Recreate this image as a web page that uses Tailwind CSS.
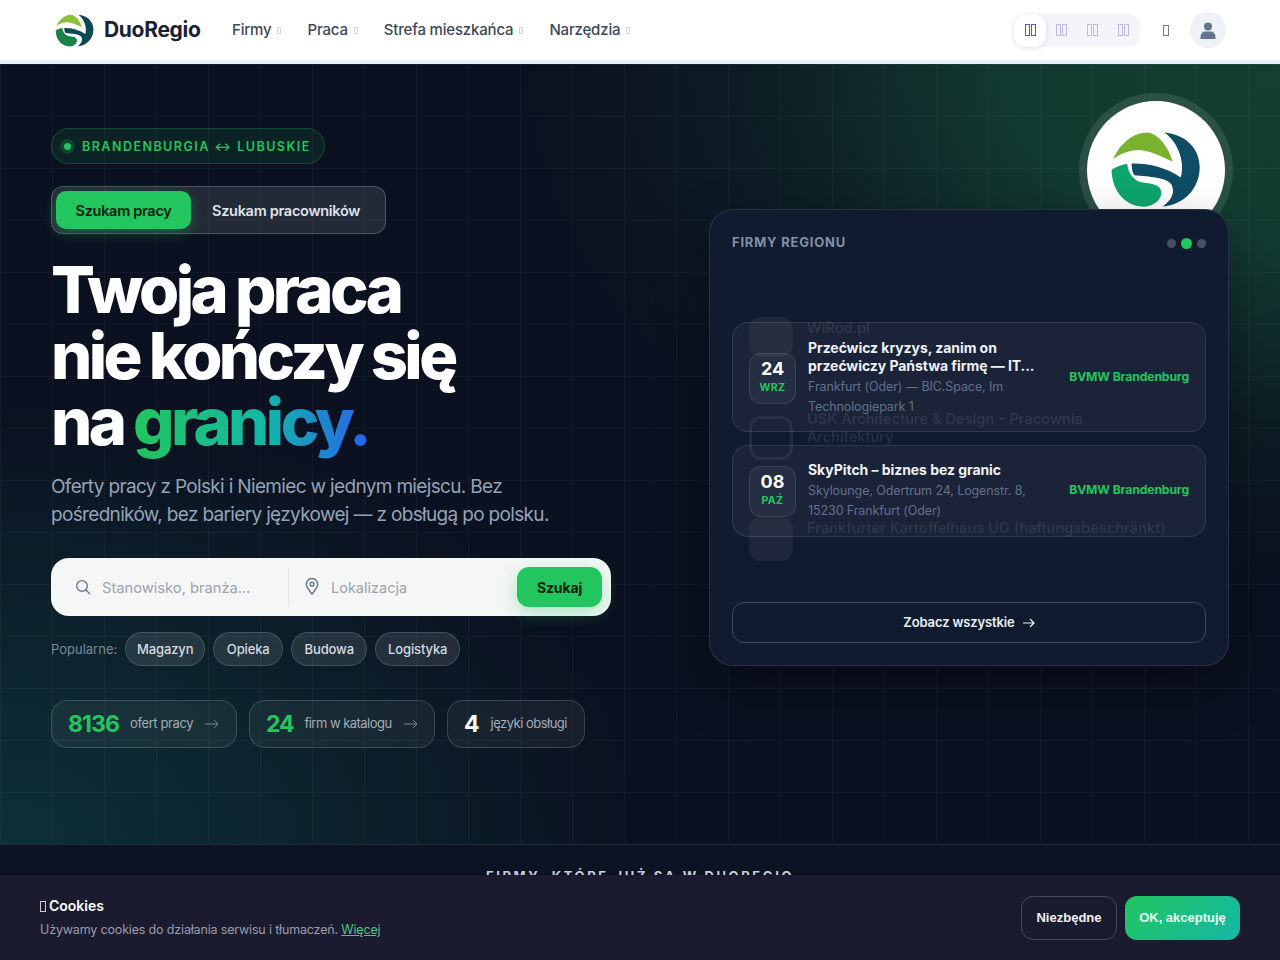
<!DOCTYPE html>
<html lang="pl">
<head>
  <meta charset="UTF-8">
  <meta name="viewport" content="width=device-width, initial-scale=1.0">
  <title>DuoRegio</title>
  <script src="https://cdn.jsdelivr.net/npm/@tailwindcss/browser@4"></script>
</head>

<body class="h-screen overflow-hidden bg-[#0c1424] font-[Inter,sans-serif]">

  <!-- nav -->
  <header class="h-[64px] bg-white border-b-[4px] border-[#eaf0f3] flex items-center pl-[55px] pr-[54px]">
    <a class="flex items-center gap-[10px] w-[177px]">
      <svg class="w-[39px] h-[35px]" viewBox="450 390 280 235">
        <path fill="#8cc23a" d="M460 475C480 430 520 395 562 394C600 396 630 440 643 484C600 462 560 445 530 448C505 450 480 460 460 475Z"/>
        <path fill="#0c4a52" d="M618 394C680 400 725 440 726 500C726 565 680 615 612 622C640 600 650 580 640 555C625 530 570 530 525 525C515 510 518 495 516 489C570 488 620 500 668 532C680 490 665 430 618 394Z"/>
        <path fill="#1b8049" d="M455 508C470 498 490 492 503 490C505 515 520 540 545 547C575 550 605 555 608 575C610 600 585 620 555 622C500 622 455 575 455 508Z"/>
      </svg>
      <span class="text-[21px] font-bold text-[#1a2035] tracking-[-0.015em]">DuoRegio</span>
    </a>
    <nav class="flex items-center gap-[26px] text-[15px] font-medium text-[#3d4659] tracking-[-0.012em]">
      <a class="flex items-center gap-[6px]">Firmy <span class="w-[4px] h-[7px] border border-[#d3d7de]"></span></a>
      <a class="flex items-center gap-[6px]">Praca <span class="w-[4px] h-[7px] border border-[#d3d7de]"></span></a>
      <a class="flex items-center gap-[6px]">Strefa mieszkańca <span class="w-[4px] h-[7px] border border-[#d3d7de]"></span></a>
      <a class="flex items-center gap-[6px]">Narzędzia <span class="w-[4px] h-[7px] border border-[#d3d7de]"></span></a>
    </nav>
    <div class="ml-auto flex items-center">
      <div class="flex items-center w-[126px] h-[33px] rounded-xl bg-[#f4f5fb]">
        <span class="w-[32px] h-[33px] rounded-xl bg-white shadow-[0_1px_5px_rgba(0,0,0,0.12)] flex items-center justify-center gap-[1px]"><i class="w-[5px] h-[12px] border border-[#5b52d6]"></i><i class="w-[5px] h-[12px] border border-[#5b52d6]"></i></span>
        <span class="w-[31px] flex justify-center gap-[1px]"><i class="w-[5px] h-[12px] border border-[#bcb9ee]"></i><i class="w-[5px] h-[12px] border border-[#bcb9ee]"></i></span>
        <span class="w-[31px] flex justify-center gap-[1px]"><i class="w-[5px] h-[12px] border border-[#bcb9ee]"></i><i class="w-[5px] h-[12px] border border-[#bcb9ee]"></i></span>
        <span class="w-[31px] flex justify-center gap-[1px]"><i class="w-[5px] h-[12px] border border-[#bcb9ee]"></i><i class="w-[5px] h-[12px] border border-[#bcb9ee]"></i></span>
      </div>
      <span class="ml-[23px] w-[6px] h-[11px] border border-[#777]"></span>
      <div class="ml-[21px] w-[36px] h-[36px] rounded-full bg-[#eef1f5] flex items-center justify-center">
        <svg class="w-[16px] h-[17px]" viewBox="0 0 16 17" fill="#64748b"><circle cx="8" cy="4.4" r="4"/><path d="M0.5 17v-2.2C0.5 11.6 3 9.6 5.5 9.6h5c2.500 0 5 2 5 5.200V17z"/></svg>
      </div>
    </div>
  </header>

  <!-- hero -->
  <section class="relative h-[780px] overflow-hidden bg-[#0b1120]">
    <div class="absolute inset-0 bg-[radial-gradient(ellipse_760px_520px_at_100%_0%,#14402f_0%,#123a30_35%,rgba(15,40,40,0.5)_70%,transparent_100%)]"></div>
    <div class="absolute inset-0 bg-[radial-gradient(ellipse_640px_440px_at_0%_100%,#0c3038_0%,rgba(13,46,52,0.6)_50%,transparent_100%)]"></div>
    <div class="absolute inset-0 bg-[linear-gradient(rgba(255,255,255,0.035)_1px,transparent_1px),linear-gradient(90deg,rgba(255,255,255,0.035)_1px,transparent_1px)] bg-[size:52px_52px]"></div>

    <div class="relative flex justify-between pl-[51px] pr-[51px] pt-[64px]">
      <!-- left column -->
      <div class="w-[560px]">
        <div class="inline-flex items-center h-[36px] pl-[12px] pr-[13px] rounded-full border border-[#22c55e]/25 bg-[#22c55e]/10 text-[12.500px] font-semibold tracking-[0.118em] text-[#22c55e]">
          <span class="w-[7px] h-[7px] rounded-full bg-[#22c55e] shadow-[0_0_0_4px_rgba(34,197,94,0.2)] mr-[11px]"></span>
          <span class="pt-[2px]">BRANDENBURGIA ↔ LUBUSKIE</span>
        </div>

        <div class="mt-[22px] flex items-center w-[335px] h-[48px] px-[4px] rounded-xl border border-white/20 bg-white/10 text-[14.500px] font-semibold tracking-[-0.02em]">
          <span class="w-[135px] h-[38px] pt-[1px] rounded-[10px] bg-[#22c55e] text-[#06200f] flex items-center justify-center shadow-[0_4px_14px_rgba(34,197,94,0.35)]">Szukam pracy</span>
          <span class="ml-[21px] pt-[1px] text-[#dfe3ea]">Szukam pracowników</span>
        </div>

        <h1 class="mt-[23px] text-[65px] leading-[66px] font-extrabold tracking-[-0.055em] [word-spacing:-1px] text-white">
          Twoja praca<br>nie kończy się<br>na <span class="bg-[linear-gradient(90deg,#22c55e,#14b8a6_55%,#2563eb)] bg-clip-text text-transparent">granicy.</span>
        </h1>

        <p class="mt-[18px] w-[520px] text-[19px] leading-[28px] text-[#94a3b8] tracking-[-0.035em]">Oferty pracy z Polski i Niemiec w jednym miejscu. Bez pośredników, bez bariery językowej — z obsługą po polsku.</p>

        <form class="mt-[29px] flex items-center h-[58px] rounded-[18px] bg-[#f5f6f6] pl-[24px] pr-[9px]">
          <svg class="w-[16px] h-[16px] shrink-0" viewBox="0 0 24 24" fill="none" stroke="#64748b" stroke-width="2" stroke-linecap="round"><circle cx="10.500" cy="10.500" r="8"/><path d="m16.500 16.500 5.500 5.500"/></svg>
          <span class="ml-[11px] w-[186px] pt-[2px] text-[14.700px] text-[#9ca3af]">Stanowisko, branża...</span>
          <span class="w-px h-[40px] bg-[#e5e7eb]"></span>
          <svg class="ml-[16px] w-[14px] h-[17px] shrink-0 -mt-[2px]" viewBox="0 0 14 18" fill="none" stroke="#64748b" stroke-width="1.500"><path d="M7 17C3.500 12.500 1 9.500 1 6.500a6 6 0 0 1 12 0C13 9.500 10.500 12.500 7 17Z"/><circle cx="7" cy="6.500" r="2"/></svg>
          <span class="ml-[12px] pt-[2px] text-[14.500px] text-[#9ca3af]">Lokalizacja</span>
          <span class="ml-auto w-[85px] h-[40px] rounded-xl bg-[#22c55e] text-[14px] font-bold text-[#06200f] tracking-[-0.01em] flex items-center justify-center shadow-[0_6px_18px_rgba(34,197,94,0.35)]">Szukaj</span>
        </form>

        <div class="mt-[16px] flex items-center gap-[8px] text-[13px]">
          <span class="text-[#7d8a99] pt-[1px]">Popularne:</span>
          <a class="h-[34px] w-[80px] pt-[1px] justify-center flex items-center rounded-full border border-white/15 bg-white/10 font-medium tracking-[-0.01em] text-[#d5dae2]">Magazyn</a>
          <a class="h-[34px] w-[70px] pt-[1px] justify-center flex items-center rounded-full border border-white/15 bg-white/10 font-medium tracking-[-0.01em] text-[#d5dae2]">Opieka</a>
          <a class="h-[34px] w-[76px] pt-[1px] justify-center flex items-center rounded-full border border-white/15 bg-white/10 font-medium tracking-[-0.01em] text-[#d5dae2]">Budowa</a>
          <a class="h-[34px] w-[85px] pt-[1px] justify-center flex items-center rounded-full border border-white/15 bg-white/10 font-medium tracking-[-0.01em] text-[#d5dae2]">Logistyka</a>
        </div>

        <div class="mt-[34px] flex items-center gap-[12px]">
          <a class="w-[186px] h-[48px] pl-[16px] flex items-center rounded-2xl border border-white/15 bg-white/5">
            <b class="text-[23px] font-bold text-[#22c55e] tracking-[-0.04em]">8136</b>
            <span class="ml-[11px] text-[13px] text-[#a3adba] tracking-[-0.03em]">ofert pracy</span>
            <svg class="ml-[12px] w-[14px] h-[10px]" viewBox="0 0 14 10" fill="none" stroke="#7c8796"><path d="M0 5h13M9 1l4 4-4 4"/></svg>
          </a>
          <a class="w-[186px] h-[48px] pl-[16px] flex items-center rounded-2xl border border-white/15 bg-white/5">
            <b class="text-[23px] font-bold text-[#22c55e] tracking-[-0.05em]">24</b>
            <span class="ml-[11px] text-[13px] text-[#a3adba] tracking-[-0.04em]">firm w katalogu</span>
            <svg class="ml-[12px] w-[14px] h-[10px]" viewBox="0 0 14 10" fill="none" stroke="#7c8796"><path d="M0 5h13M9 1l4 4-4 4"/></svg>
          </a>
          <div class="w-[138px] h-[48px] pl-[16px] flex items-center rounded-2xl border border-white/15 bg-white/5">
            <b class="text-[23px] font-bold text-white">4</b>
            <span class="ml-[11px] text-[13px] text-[#a3adba] tracking-[-0.04em]">języki obsługi</span>
          </div>
        </div>
      </div>

      <!-- right column -->
      <div class="relative w-[520px] mt-[81px]">
        <div class="absolute left-[370px] top-[-116px] w-[154px] h-[154px] rounded-full bg-white/10 flex items-center justify-center">
          <div class="w-[138px] h-[138px] rounded-full bg-white flex items-start justify-center pt-[30px] pr-[1px]">
            <svg class="w-[91px] h-[77px]" viewBox="450 390 280 235">
              <path fill="#78b22f" d="M460 475C480 430 520 395 562 394C600 396 630 440 643 484C600 462 560 445 530 448C505 450 480 460 460 475Z"/>
              <path fill="#0f4c66" d="M618 394C680 400 725 440 726 500C726 565 680 615 612 622C640 600 650 580 640 555C625 530 570 530 525 525C515 510 518 495 516 489C570 488 620 500 668 532C680 490 665 430 618 394Z"/>
              <path fill="#0ea56d" d="M455 508C470 498 490 492 503 490C505 515 520 540 545 547C575 550 605 555 608 575C610 600 585 620 555 622C500 622 455 575 455 508Z"/>
            </svg>
          </div>
        </div>

        <div class="relative h-[457px] rounded-[24px] border border-white/10 bg-[#111b30] px-[22px] pt-[24px] shadow-[0_20px_50px_rgba(0,0,0,0.35)]">
          <div class="flex items-center justify-between h-[18px]">
            <span class="text-[13px] font-bold tracking-[0.06em] text-[#8390a2]">FIRMY REGIONU</span>
            <div class="flex items-center gap-[5px]">
              <span class="w-[9px] h-[9px] rounded-full bg-[#475063]"></span>
              <span class="w-[11px] h-[11px] rounded-full bg-[#22c55e]"></span>
              <span class="w-[9px] h-[9px] rounded-full bg-[#475063]"></span>
            </div>
          </div>

          <!-- faded company ticker behind the event rows -->
          <div class="absolute left-[39px] top-[107px] w-[400px] opacity-[0.09] blur-[0.5px] text-[14.700px] leading-[18px] font-medium text-white">
            <div class="flex gap-[14px] h-[99px]">
              <span class="w-[44px] h-[40px] shrink-0 rounded-xl bg-white/60"></span><span class="pt-[2px]">WiRod.pl</span>
            </div>
            <div class="flex gap-[14px] h-[101px]">
              <span class="w-[44px] h-[44px] shrink-0 rounded-xl border-[3px] border-white/70"></span><span class="w-[300px] -mt-[6px]">USK Architecture &amp; Design – Pracownia Architektury</span>
            </div>
            <div class="flex gap-[14px]">
              <span class="w-[44px] h-[44px] shrink-0 rounded-xl bg-white/60"></span><span class="whitespace-nowrap mt-[2px]">Frankfurter Kartoffelhaus UG (haftungsbeschränkt)</span>
            </div>
          </div>

          <div class="relative mt-[70px] flex flex-col gap-[13px]">
            <div class="flex items-center h-[110px] pt-[2px] pl-[16px] pr-[16px] rounded-2xl border border-white/10 bg-white/[0.04]">
              <div class="w-[47px] h-[51px] shrink-0 rounded-xl border border-white/10 bg-white/5 flex flex-col items-center justify-center">
                <b class="-mt-[3px] text-[18px] leading-[20px] font-bold text-white">24</b>
                <span class="mt-[3px] text-[10.500px] leading-[12px] font-bold tracking-[0.04em] text-[#22c55e]">WRZ</span>
              </div>
              <div class="ml-[12px] w-[232px]">
                <div class="text-[14px] leading-[18px] font-bold tracking-[-0.004em] text-[#eef1f5]">Przećwicz kryzys, zanim on przećwiczy Państwa firmę — IT...</div>
                <div class="mt-[2px] text-[12.500px] leading-[20px] tracking-[-0.008em] text-[#64708a]">Frankfurt (Oder) — BIC.Space, Im Technologiepark 1</div>
              </div>
              <span class="ml-auto -mt-[2px] text-[12.200px] font-bold tracking-[-0.01em] text-[#22c55e]">BVMW Brandenburg</span>
            </div>
            <div class="flex items-center h-[92px] pl-[16px] pr-[16px] rounded-2xl border border-white/10 bg-white/[0.04]">
              <div class="w-[47px] h-[51px] shrink-0 rounded-xl border border-white/10 bg-white/5 flex flex-col items-center justify-center">
                <b class="-mt-[3px] text-[18px] leading-[20px] font-bold text-white">08</b>
                <span class="mt-[3px] text-[10.500px] leading-[12px] font-bold tracking-[0.04em] text-[#22c55e]">PAŹ</span>
              </div>
              <div class="ml-[12px] w-[232px]">
                <div class="text-[14px] leading-[18px] font-bold tracking-[-0.004em] text-[#eef1f5]">SkyPitch – biznes bez granic</div>
                <div class="mt-[2px] text-[12.500px] leading-[20px] tracking-[-0.008em] text-[#64708a]">Skylounge, Odertrum 24, Logenstr. 8, 15230 Frankfurt (Oder)</div>
              </div>
              <span class="ml-auto -mt-[2px] text-[12.200px] font-bold tracking-[-0.01em] text-[#22c55e]">BVMW Brandenburg</span>
            </div>
          </div>

          <a class="mt-[65px] h-[41px] flex items-center justify-center gap-[8px] rounded-xl border border-white/20 text-[13px] font-semibold tracking-[-0.01em] text-[#eef1f5]">
            Zobacz wszystkie
            <svg class="w-[12px] h-[10px]" viewBox="0 0 12 10" fill="none" stroke="#eef1f5" stroke-width="1.200"><path d="M0 5h11M7 1l4 4-4 4"/></svg>
          </a>
        </div>
      </div>
    </div>
  </section>

  <!-- partners strip, mostly hidden under the cookie bar -->
  <section class="border-t border-white/10 pt-[22px] text-center text-[13px] font-bold tracking-[0.2em] text-[#c9ced8]">FIRMY, KTÓRE JUŻ SĄ W DUOREGIO</section>

  <!-- cookies -->
  <div class="fixed left-0 right-0 bottom-0 h-[85px] bg-[#1b1b2f] flex items-center pl-[40px] pr-[40px]">
    <div>
      <div class="flex items-center gap-[3px] text-[14px] font-semibold leading-[20px] text-white"><span class="w-[6px] h-[11px] border border-[#ccc]"></span>Cookies</div>
      <p class="mt-[5px] text-[12.500px] leading-[18px] text-[#9a9cab] tracking-[-0.013em]">Używamy cookies do działania serwisu i tłumaczeń. <a class="text-[#55c088] underline">Więcej</a></p>
    </div>
    <div class="ml-auto flex items-center gap-[8px] font-['Liberation_Sans',sans-serif] text-[13px] font-bold">
      <button class="w-[96px] h-[44px] rounded-xl border border-white/20 text-[#f1f1f5]">Niezbędne</button>
      <button class="w-[115px] h-[44px] rounded-xl bg-[linear-gradient(135deg,#22c55e,#14b8a6)] text-[#eafff3]">OK, akceptuję</button>
    </div>
  </div>

</body>
</html>
